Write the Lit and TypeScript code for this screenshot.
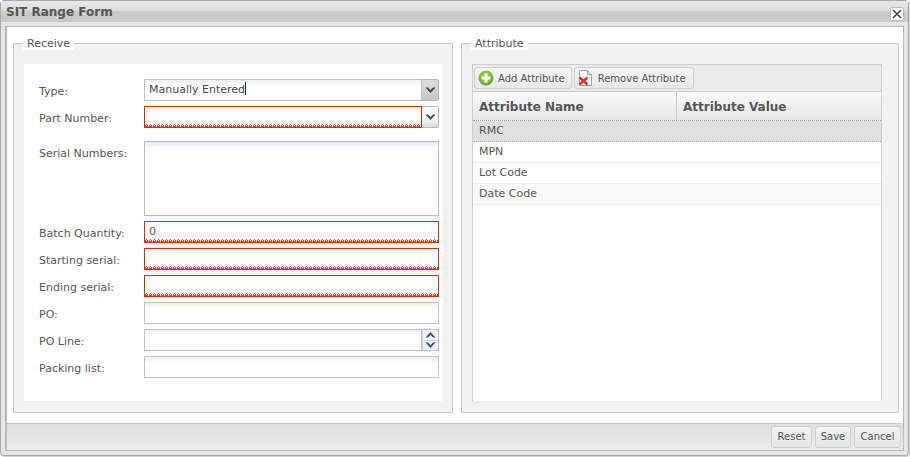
import { LitElement, html, css } from "lit";
import { customElement } from "lit/decorators.js";

const chev = (up: boolean, color: string) => html`<svg width="11" height="7" viewBox="0 0 11 7"><path d="${up ? "M0.5 6.5 L5.5 1 L10.5 6.5 L8 6.5 L5.5 4 L3 6.5 Z" : "M0.5 0.5 L3 0.5 L5.5 3 L8 0.5 L10.5 0.5 L5.5 6 Z"}" fill="${color}"/></svg>`;

@customElement("app-root")
export class AppRoot extends LitElement {
  static styles = css`
    :host { display: block; width: 910px; height: 457px; overflow: hidden; background: #fff; font-family: "DejaVu Sans", Verdana, sans-serif; font-size: 11px; color: #555; }
    * { box-sizing: border-box; }
    .win { width: 909px; height: 456px; border: 1px solid #a8a8a8; border-radius: 4px; background: #e6e6e6; display: flex; flex-direction: column; box-shadow: 1px 1px 1px #ccc; }
    .title { height: 24px; flex: none; padding: 0 4px 3px 5px; display: flex; align-items: center; justify-content: space-between; font-weight: bold; font-size: 12px; color: #555; background: linear-gradient(#e8e8e8 0, #dcdcdc 9px, #c9c9c9 11px, #c9c9c9 21px, #e4e4e4 21px); }
    .close { width: 14px; height: 14px; margin-top: 4px; background: #fff; border: 1px solid #bbb; border-radius: 2px; display: flex; align-items: center; justify-content: center; }
    .body { flex: 1; margin: 1px 4px 4px 4px; border: 1px solid #bdb5b7; border-width: 1px 1px 1px 2px; display: flex; flex-direction: column; background: #fff; min-height: 0; }
    .main { flex: 1; min-height: 0; display: flex; gap: 8px; padding: 9px 4px 9px 6px; }
    fieldset { margin: 1px 0 0; width: 438px; border: 1px solid #c8c8c8; background: #f2f2f2; padding: 14px 10px 11px 10px; min-width: 0; height: 376px; display: flex; }
    fieldset.rec { width: 440px; }
    legend { padding: 0 4px; margin-left: -1px; font-size: 11px; color: #555; background: #fff; line-height: 13px; }
    .receive { flex: 1; background: #fff; padding: 15px 3px 0 15px; display: flex; flex-direction: column; gap: 5px; }
    .row { display: flex; height: 22px; align-items: flex-start; }
    .row label { width: 105px; flex: none; line-height: 26px; }
    .ctl { flex: 1; display: flex; height: 100%; min-width: 0; }
    .in { flex: 1; min-width: 0; height: 100%; border: 1px solid #c0c0c8; background: linear-gradient(#eef0f0, #fff 7px); padding: 0 4px; line-height: 20px; color: #444; white-space: nowrap; }
    .in.bad { border-color: #cc3300; color: #556;
      background-color: #fff;
      background-image:
        linear-gradient(90deg, transparent 1px, #ee3a30 1px 2px, transparent 2px),
        linear-gradient(90deg, #ee3a30 0 1px, #fff 1px 2px, #ee3a30 2px 3px, #fff 3px),
        linear-gradient(90deg, #ee3a30 0 3px, #fbd0c8 3px);
      background-size: 4px 1px;
      background-repeat: repeat-x;
      background-position: left 0 bottom 2px, left 0 bottom 1px, left 0 bottom 0;
    }
    .caret { display: inline-block; width: 1px; height: 13px; background: #333; vertical-align: -2px; }
    .trig { width: 17px; flex: none; border: 1px solid #b8b8bc; border-left: none; border-radius: 0 2px 2px 0; display: flex; align-items: center; justify-content: center; background: linear-gradient(#fafafa, #f4f4f4 60%, #dcdcdc); }
    .trig.act { background: linear-gradient(#dedede, #c6c6c6); }
    .spin { width: 17px; flex: none; border: 1px solid #c0c0c8; border-left: 1px solid #d4d4d8; display: flex; flex-direction: column; }
    .spin div { flex: 1; display: flex; align-items: center; justify-content: center; background: #f0f0f0; }
    .spin div + div { border-top: 1px solid #d8d8d8; }
    .row.ta { height: 75px; margin-top: 8px; }
    .ta .in { background: linear-gradient(#e8eaf0, #fff 7px); border-color: #b8bcc8; }
    .grid { flex: 1; border: 1px solid #d0d0d0; border-bottom: none; display: flex; flex-direction: column; background: #fff; margin-right: 6px; }
    .tb { height: 27px; flex: none; background: #eaeaea; border-bottom: 1px solid #d0d0d0; display: flex; gap: 2px; padding: 2px 1px; }
    .btn { height: 22px; border: 1px solid #d0d0d0; border-radius: 3px; background: linear-gradient(#f6f6f6, #e8e8e8); display: flex; align-items: center; gap: 4px; padding: 0 6px 0 3px; color: #555; font-size: 10px; }
    .btn.rm { padding: 0 7px 0 2px; gap: 5px; }
    .hdr { height: 29px; flex: none; display: flex; border-bottom: 1px dotted #aaa; background: linear-gradient(#fafafa, #e6e6e6); font-weight: bold; font-size: 12px; line-height: 30px; color: #555; }
    .hdr div { padding-left: 6px; }
    .hdr .a { width: 204px; border-right: 1px solid #ccc; }
    .hdr .b { flex: 1; }
    .r { height: 21px; line-height: 20px; padding-left: 6px; border-bottom: 1px solid #ececec; flex: none; }
    .r.sel { background: #e0e0e0; border-bottom: 1px dotted #aaa; }
    .r.alt { background: #fafafa; }
    .foot { height: 27px; flex: none; background: linear-gradient(#dedede, #ececec); border-top: 1px solid #c8c8c8; display: flex; justify-content: flex-end; gap: 3px; padding: 2px 2px; }
    .foot .b { height: 22px; border: 1px solid #d0d0d0; border-radius: 3px; text-align: center; line-height: 20px; font-size: 10px; background: linear-gradient(#f0f0f0, #e6e6e6); color: #555; }
    .w41 { width: 41px; }
    .w36 { width: 36px; }
    .w47 { width: 47px; }
  `;
  private field(label: string, inner: unknown, cls = "") {
    return html`<div class="row ${cls}"><label>${label}</label><div class="ctl">${inner}</div></div>`;
  }
  render() {
    return html`<div class="win">
      <div class="title"><span>SIT Range Form</span>
        <div class="close"><svg width="10" height="10" viewBox="0 0 10 10"><path d="M1 1 L9 9 M9 1 L1 9" stroke="#444" stroke-width="1.6"/></svg></div></div>
      <div class="body">
        <div class="main">
          <fieldset class="rec"><legend>Receive</legend>
            <div class="receive">
              ${this.field("Type:", html`<div class="in">Manually Entered<span class="caret"></span></div><div class="trig act">${chev(false, "#444")}</div>`)}
              ${this.field("Part Number:", html`<div class="in bad"></div><div class="trig">${chev(false, "#444")}</div>`)}
              ${this.field("Serial Numbers:", html`<div class="in"></div>`, "ta")}
              ${this.field("Batch Quantity:", html`<div class="in bad">0</div>`)}
              ${this.field("Starting serial:", html`<div class="in bad"></div>`)}
              ${this.field("Ending serial:", html`<div class="in bad"></div>`)}
              ${this.field("PO:", html`<div class="in"></div>`)}
              ${this.field("PO Line:", html`<div class="in"></div><div class="spin"><div>${chev(true, "#2f5597")}</div><div>${chev(false, "#2f5597")}</div></div>`)}
              ${this.field("Packing list:", html`<div class="in"></div>`)}
            </div>
          </fieldset>
          <fieldset><legend>Attribute</legend>
            <div class="grid">
              <div class="tb">
                <div class="btn"><svg width="16" height="16" viewBox="0 0 16 16"><defs><radialGradient id="g" cx="45%" cy="35%" r="70%"><stop offset="0" stop-color="#a5dc5a"/><stop offset="1" stop-color="#5aa51e"/></radialGradient></defs><circle cx="8" cy="8" r="7.5" fill="url(#g)"/><path d="M3.5 8 h9 M8 3.5 v9" stroke="#fff" stroke-width="3"/></svg>Add Attribute</div>
                <div class="btn rm"><svg width="16" height="16" viewBox="0 0 16 16"><path d="M2.5 .5 h8 l4 4 v11 h-12 z" fill="#fff" stroke="#9aa0b0"/><path d="M10.5 .5 v4 h4" fill="#dde" stroke="#9aa0b0"/><path d="M2.5 7.5 L10.5 14.5 M10.5 7.5 L2.5 14.5" stroke="#e0301c" stroke-width="2.4"/></svg>Remove Attribute</div>
              </div>
              <div class="hdr"><div class="a">Attribute Name</div><div class="b">Attribute Value</div></div>
              <div class="r sel">RMC</div>
              <div class="r">MPN</div>
              <div class="r">Lot Code</div>
              <div class="r alt">Date Code</div>
            </div>
          </fieldset>
        </div>
        <div class="foot"><div class="b w41">Reset</div><div class="b w36">Save</div><div class="b w47">Cancel</div></div>
      </div>
    </div>`;
  }
}
